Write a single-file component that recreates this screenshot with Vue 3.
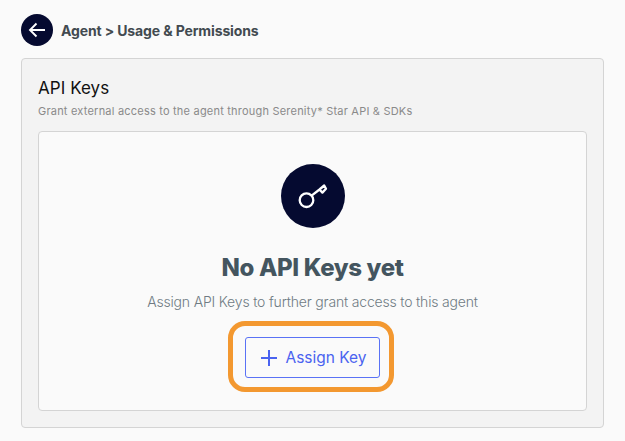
<script setup>
const title = 'Agent > Usage & Permissions'
</script>

<template>
  <div class="page">
    <header class="header">
      <button class="back" aria-label="Back">
        <svg width="32" height="32" viewBox="0 0 32 32" fill="none">
          <path d="M24 16H9M15.5 9.5L9 16L15.5 22.5" stroke="#fff" stroke-width="1.9" />
        </svg>
      </button>
      <span class="crumb">{{ title }}</span>
    </header>

    <section class="card">
      <h2 class="card-title">API Keys</h2>
      <p class="card-sub">Grant external access to the agent through Serenity* Star API &amp; SDKs</p>

      <div class="empty">
        <div class="key-circle">
          <svg width="36" height="36" viewBox="0 0 36 36" fill="none" stroke="#fff" stroke-width="2.3">
            <circle cx="11.5" cy="22.2" r="6.8" />
            <path d="M16.6 17.6L24.5 11.5L29.2 7.5L31 10.8L27.4 14.6L24.5 11.5" stroke-linejoin="round" />
          </svg>
        </div>
        <h3 class="empty-title">No API Keys yet</h3>
        <p class="empty-text">Assign API Keys to further grant access to this agent</p>
        <div class="assign-wrap">
          <button class="assign">
            <svg width="16" height="16" viewBox="0 0 16 16" fill="none" stroke="#4a63f0" stroke-width="2">
              <path d="M8 0V16M0 8H16" />
            </svg>
            <span>Assign Key</span>
          </button>
          <div class="highlight"></div>
        </div>
      </div>
    </section>
  </div>
</template>

<style>
html,
body {
  margin: 0;
  background: #fafafa;
}
</style>

<style scoped>
.page {
  width: 625px;
  height: 441px;
  box-sizing: border-box;
  padding: 14px 21px 0;
  background: #fafafa;
  font-family: Inter, Roboto, sans-serif;
  overflow: hidden;
}

.header {
  display: flex;
  align-items: center;
  gap: 8px;
  height: 32px;
}

.back {
  width: 32px;
  height: 32px;
  padding: 0;
  border: 0;
  border-radius: 50%;
  background: #050a30;
  display: flex;
  align-items: center;
  justify-content: center;
}

.crumb {
  font-size: 14px;
  font-weight: 650;
  color: #424a50;
  letter-spacing: -0.13px;
}

.card {
  margin-top: 12px;
  height: 370px;
  box-sizing: border-box;
  padding: 18px 16px 16px;
  background: #f3f3f3;
  border: 1px solid #d4d4d4;
  border-radius: 4px;
  display: flex;
  flex-direction: column;
}

.card-title {
  margin: 0;
  font-size: 17px;
  line-height: 22px;
  font-weight: 400;
  color: #111;
  letter-spacing: 0.05px;
}

.card-sub {
  margin: 4px 0 0;
  font-size: 11px;
  line-height: 16px;
  color: #8a8a8a;
  letter-spacing: 0.21px;
}

.empty {
  margin-top: 12px;
  flex: 1;
  background: #fafafa;
  border: 1px solid #d4d4d4;
  border-radius: 4px;
  display: flex;
  flex-direction: column;
  align-items: center;
  padding-top: 32px;
}

.key-circle {
  width: 64px;
  height: 64px;
  border-radius: 50%;
  background: #050a30;
  display: flex;
  align-items: center;
  justify-content: center;
}

.empty-title {
  margin: 24px 0 0;
  font-size: 24px;
  line-height: 32px;
  font-weight: 800;
  color: #44555f;
  letter-spacing: -0.35px;
}

.empty-text {
  margin: 8px 0 0;
  font-size: 14px;
  line-height: 20px;
  font-weight: 300;
  color: #6f7b83;
  letter-spacing: -0.18px;
}

.assign-wrap {
  position: relative;
  margin-top: 25px;
}

.assign {
  width: 135px;
  height: 41px;
  padding: 0 0 0 3px;
  background: transparent;
  border: 1px solid #5a72f5;
  border-radius: 3px;
  color: #4a63f0;
  font: inherit;
  font-size: 15.5px;
  display: flex;
  align-items: center;
  justify-content: center;
  gap: 8px;
}

.highlight {
  position: absolute;
  top: -16px;
  right: -14px;
  bottom: -14px;
  left: -17px;
  border: 5px solid #f39830;
  border-radius: 17px;
  pointer-events: none;
}
</style>
